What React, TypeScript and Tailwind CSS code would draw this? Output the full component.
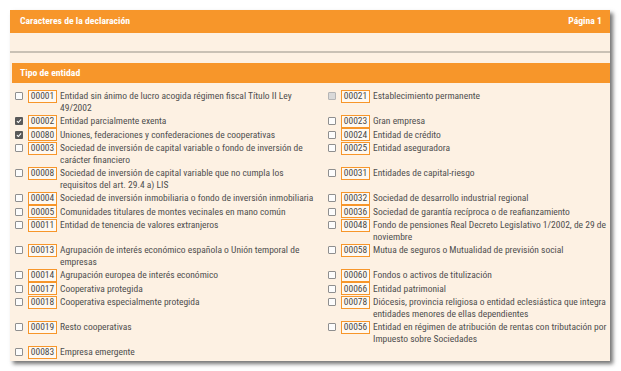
import { Fragment } from "react";

type Item = { code: string; lines: string[]; state?: "checked" | "disabled" };

const left: Item[] = [
  { code: "00001", lines: ["Entidad sin ánimo de lucro acogida régimen fiscal Título II Ley", "49/2002"] },
  { code: "00002", lines: ["Entidad parcialmente exenta"], state: "checked" },
  { code: "00080", lines: ["Uniones, federaciones y confederaciones de cooperativas"], state: "checked" },
  { code: "00003", lines: ["Sociedad de inversión de capital variable o fondo de inversión de", "carácter financiero"] },
  { code: "00008", lines: ["Sociedad de inversión de capital variable que no cumpla los", "requisitos del art. 29.4 a) LIS"] },
  { code: "00004", lines: ["Sociedad de inversión inmobiliaria o fondo de inversión inmobiliaria"] },
  { code: "00005", lines: ["Comunidades titulares de montes vecinales en mano común"] },
  { code: "00011", lines: ["Entidad de tenencia de valores extranjeros"] },
  { code: "00013", lines: ["Agrupación de interés económico española o Unión temporal de", "empresas"] },
  { code: "00014", lines: ["Agrupación europea de interés económico"] },
  { code: "00017", lines: ["Cooperativa protegida"] },
  { code: "00018", lines: ["Cooperativa especialmente protegida"] },
  { code: "00019", lines: ["Resto cooperativas"] },
  { code: "00083", lines: ["Empresa emergente"] },
];

const right: (Item | null)[] = [
  { code: "00021", lines: ["Establecimiento permanente"], state: "disabled" },
  { code: "00023", lines: ["Gran empresa"] },
  { code: "00024", lines: ["Entidad de crédito"] },
  { code: "00025", lines: ["Entidad aseguradora"] },
  { code: "00031", lines: ["Entidades de capital-riesgo"] },
  { code: "00032", lines: ["Sociedad de desarrollo industrial regional"] },
  { code: "00036", lines: ["Sociedad de garantía recíproca o de reafianzamiento"] },
  { code: "00048", lines: ["Fondo de pensiones Real Decreto Legislativo 1/2002, de 29 de", "noviembre"] },
  { code: "00058", lines: ["Mutua de seguros o Mutualidad de previsión social"] },
  { code: "00060", lines: ["Fondos o activos de titulización"] },
  { code: "00066", lines: ["Entidad patrimonial"] },
  { code: "00078", lines: ["Diócesis, provincia religiosa o entidad eclesiástica que integra", "entidades menores de ellas dependientes"] },
  { code: "00056", lines: ["Entidad en régimen de atribución de rentas con tributación por", "Impuesto sobre Sociedades"] },
  null,
];

const Check = ({ state }: { state?: Item["state"] }) => {
  if (state === "checked") {
    return (
      <span className="mt-[2px] flex h-[8px] w-[8px] shrink-0 items-center justify-center rounded-[1px] bg-[#595959]">
        <svg viewBox="0 0 8 8" className="h-[6px] w-[6px]">
          <path d="M1.2 4.2 L3.1 6 L6.8 1.8" fill="none" stroke="#fff" strokeWidth="1.4" />
        </svg>
      </span>
    );
  }
  if (state === "disabled") {
    return <span className="mt-[2px] h-[8px] w-[8px] shrink-0 rounded-[1px] border border-[#b5b5b5] bg-[#d9d9d9]" />;
  }
  return <span className="mt-[2px] h-[8px] w-[8px] shrink-0 rounded-[1px] border border-[#8f8f8f] bg-[#fcfcfc]" />;
};

const Row = ({ item }: { item: Item | null }) => {
  if (!item) return <div />;
  return (
    <div className="flex items-start">
      <Check state={item.state} />
      <span className="ml-[5px] mt-[-0.5px] flex h-[13px] w-[29px] shrink-0 items-center justify-center border-[1.5px] border-[#f7962a] bg-[#fff9f1] text-[9.5px] leading-none text-[#4a4a4a]">
        {item.code}
      </span>
      <div className="ml-[3px] text-[9.5px] leading-[12px] text-[#4f4f4f]">
        {item.lines.map((l) => (
          <div key={l} className="whitespace-nowrap">
            {l}
          </div>
        ))}
      </div>
    </div>
  );
};

export default function App() {
  return (
    <div className="h-[371px] w-[621px] overflow-hidden bg-white pl-[10px] pt-[10px] font-['Roboto_Condensed',sans-serif]">
      <div className="w-[600px] bg-[#fdf1e3] pb-[2px] shadow-[3px_3px_4px_rgba(0,0,0,0.55)]">
        <div className="flex h-[23px] items-center justify-between bg-[#f7962a] pl-[10px] pr-[8px] text-[9.7px] font-bold text-white">
          <span>Caracteres de la declaración</span>
          <span>Página 1</span>
        </div>
        <div className="h-[18px]" />
        <div className="h-[1.5px] bg-[#c9c1b5]" />
        <div className="h-[10.5px]" />
        <div className="ml-[2px] flex h-[20px] items-center bg-[#f7962a] pl-[8px] text-[9.7px] font-bold text-white">
          Tipo de entidad
        </div>
        <div className="mt-[7px] grid grid-cols-[313px_282px] gap-y-[1px] pl-[5px]">
          {left.map((l, i) => (
            <Fragment key={l.code}>
              <Row item={l} />
              <Row item={right[i]} />
            </Fragment>
          ))}
        </div>
      </div>
    </div>
  );
}
